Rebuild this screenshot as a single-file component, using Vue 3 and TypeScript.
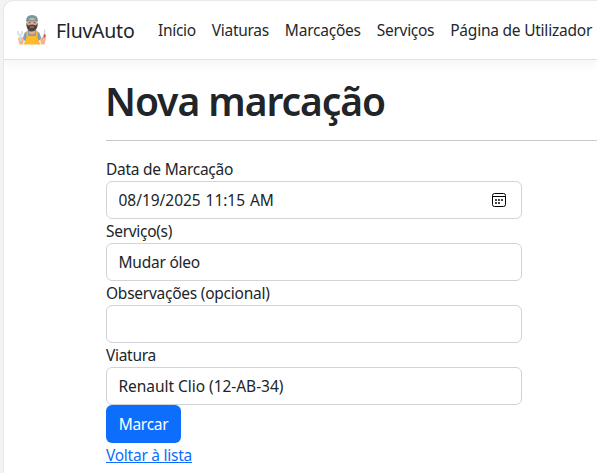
<script setup lang="ts">
import { ref } from 'vue'

interface NavItem { label: string; name: string }

const navItems: NavItem[] = [
  { label: 'Início', name: 'inicio' },
  { label: 'Viaturas', name: 'viaturas' },
  { label: 'Marcações', name: 'marcacoes' },
  { label: 'Serviços', name: 'servicos' },
  { label: 'Página de Utilizador', name: 'pagina' },
]

const date = ref('08/19/2025 11:15 AM')
const service = ref('Mudar óleo')
const notes = ref('')
const car = ref('Renault Clio (12-AB-34)')
</script>

<template>
  <div class="frame">
    <div class="page">
      <header class="navbar">
        <a class="brand">
          <svg class="logo" viewBox="0 0 32 32" aria-hidden="true">
            <path d="M6.500 25l2-6 4-3h7l4 3 2 6-3 2H9z" fill="#7f9fb5" />
            <path d="M13 15h6v4q-3 3-6 0z" fill="#e9ad88" />
            <path d="M10.500 17l1.500-.5V22h8v-5.500l1.500.5v7l3 6.500H7.500l3-6.500z" fill="#ffb92b" />
            <path d="M10.500 6h11v5q-1 6-5.500 6t-5.500-6z" fill="#edb18d" />
            <path d="M10.500 8.500l1.500 3q4-2 8 0l1.500-3V12q-1 5-5.500 5.500T10.500 12z" fill="#4c4545" />
            <path d="M14 13h4" stroke="#c98570" />
            <path d="M12.500 8.800h2M17.500 8.800h2" stroke="#5b4440" />
            <path d="M10 7Q10 1 16 1t6 6l-1 .5H11z" fill="#7796aa" />
            <path d="M13.500 4h5v2h-5z" fill="#cdbb77" />
            <path d="M2 24l3-1.500L8 25l-1 5.500H3.500zM30 24l-3-1.500L24 25l1 5.500h3.500z" fill="#f4b28e" />
            <path d="M4.800 27L4 20M2 17v3q2 2 4 0v-3" fill="none" stroke="#d3dde4" stroke-width="1.600" />
            <path d="M28.500 15.500v6" stroke="#cbd7df" stroke-width="1.400" />
            <path d="M28.600 20.500v3" stroke="#d93850" stroke-width="2" />
          </svg>
          <span class="brand-name">FluvAuto</span>
        </a>
        <nav class="nav">
          <a v-for="item in navItems" :key="item.name" class="nav-link" :class="item.name">{{ item.label }}</a>
        </nav>
      </header>
      <main class="content">
        <h1>Nova marcação</h1>
        <hr />
        <form class="form" @submit.prevent>
          <label for="date" class="l-date">Data de Marcação</label>
          <div class="date-field">
            <input id="date" v-model="date" class="control i-date" type="text" />
            <svg class="calendar" viewBox="0 0 16 16" aria-hidden="true">
              <rect x="1.500" y="1.500" width="13" height="13" rx="2" fill="none" stroke="#000" />
              <path d="M2 4.500h12" stroke="#000" />
              <path d="M4 7h2v2H4zM7 7h2v2H7zM10 7h2v2h-2zM4 10h2v2H4zM7 10h2v2H7z" fill="#444" />
            </svg>
          </div>
          <label for="service" class="l-service">Serviço(s)</label>
          <input id="service" v-model="service" class="control i-service" type="text" />
          <label for="notes" class="l-notes">Observações (opcional)</label>
          <input id="notes" v-model="notes" class="control" type="text" />
          <label for="car" class="l-car">Viatura</label>
          <input id="car" v-model="car" class="control i-car" type="text" />
          <button type="submit" class="submit">Marcar</button>
          <a class="back">Voltar à lista</a>
        </form>
      </main>
    </div>
  </div>
</template>

<style>
body { background: #f3f3f3; overflow: hidden; }
</style>

<style scoped>
* { box-sizing: border-box; }
.frame {
  height: 473px;
  padding: 1px 0 0 4px;
  overflow: hidden;
  background: #f3f3f3;
  color: #212529;
  font-family: "Noto Sans", "Open Sans", sans-serif;
  font-size: 15.5px;
  line-height: 24px;
  letter-spacing: -0.3px;
}
.page {
  height: 472px;
  background: #fff;
  border-top-left-radius: 9px;
  box-shadow: 0 0 2px #ccc;
  overflow: hidden;
}
.navbar {
  height: 59px;
  display: flex;
  align-items: center;
  padding-left: 12px;
  border-bottom: 1px solid #dee2e6;
  box-shadow: 0 4px 12px rgba(0, 0, 0, 0.05);
  white-space: nowrap;
}
.brand { display: flex; align-items: center; width: 142px; }
.logo { width: 32px; height: 32px; margin-right: 8px; flex: none; }
.brand-name { padding-top: 2px; font-size: 19.5px; line-height: 30px; letter-spacing: -0.25px; }
.nav { display: flex; gap: 16px; }
.nav-link { color: #24282c; }
.viaturas { letter-spacing: -0.3px; }
.marcacoes { letter-spacing: -0.22px; }
.servicos { letter-spacing: -0.3px; }
.pagina { letter-spacing: -0.23px; }
.content { padding: 16px 0 0 102px; }
h1 {
  margin: 0 0 16px -1px;
  padding-top: 1px;
  height: 48px;
  font-size: 39px;
  line-height: 48px;
  font-weight: 600;
  letter-spacing: -1.05px;
  white-space: nowrap;
}
hr { height: 1px; margin: 0 0 16px; border: 0; background: #c7c8c9; }
.form { width: 416px; display: flex; flex-direction: column; align-items: flex-start; }
.form label { height: 24px; white-space: nowrap; }
.form .l-date { letter-spacing: -0.25px; }
.form .l-notes { letter-spacing: -0.25px; }
.control {
  width: 100%;
  height: 38px;
  padding: 6px 12px;
  border: 1px solid #ced4da;
  border-radius: 6px;
  background: #fff;
  color: #212529;
  font: inherit;
  letter-spacing: inherit;
  outline: none;
}
.date-field { position: relative; width: 100%; height: 38px; }
.date-field .control { display: block; }
.i-date { letter-spacing: -0.03px; word-spacing: 0.9px; padding-left: 11.5px; }
.i-service { letter-spacing: -0.23px; padding-left: 11.5px; }
.i-car { letter-spacing: -0.04px; padding-left: 11.5px; }
.calendar { position: absolute; right: 15px; top: 11px; width: 16px; height: 16px; }
.submit {
  width: 75px;
  height: 38px;
  padding: 0;
  border: 0;
  border-radius: 6px;
  background: #0d6efd;
  color: #fff;
  font: inherit;
  letter-spacing: inherit;
}
.back { color: #0d6efd; text-decoration: underline; letter-spacing: -0.25px; }
</style>
